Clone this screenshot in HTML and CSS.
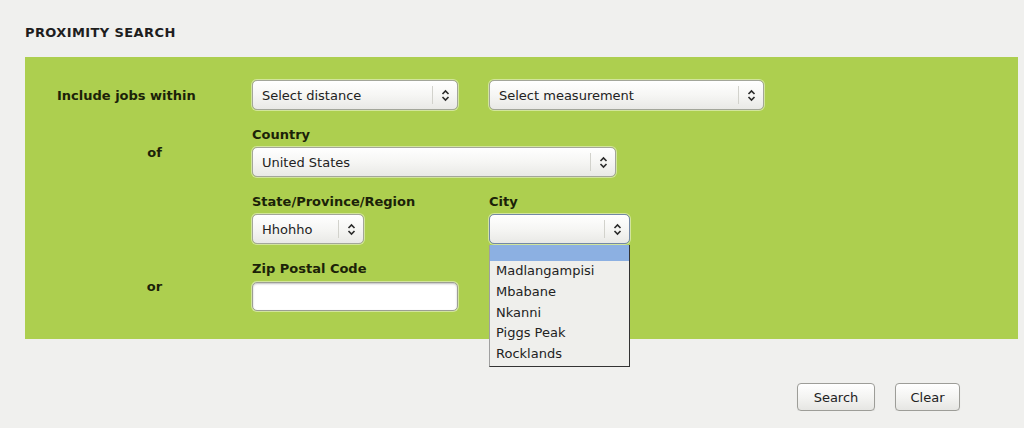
FILE: index.html
```html
<!DOCTYPE html>
<html lang="en">
<head>
    <meta charset="UTF-8">
    <meta name="viewport" content="width=device-width, initial-scale=1.0">
    <title>Proximity Search</title>
    <link rel="stylesheet" href="styles.css">
</head>
<body>

    <h2 class="section-title">PROXIMITY SEARCH</h2>

    <div class="panel">
        <!-- distance + unit -->
        <div class="label label-left">Include jobs within</div>
        <div class="fields">
            <div class="col">
                <div class="select w-distance"><span class="value">Select distance</span><span class="arrow"><svg width="9" height="13" viewBox="0 0 9 13"><path d="M1.5 5 L4.5 2 L7.5 5 M1.5 8 L4.5 11 L7.5 8" /></svg></span></div>
            </div>
            <div class="col">
                <div class="select w-measure"><span class="value">Select measurement</span><span class="arrow"><svg width="9" height="13" viewBox="0 0 9 13"><path d="M1.5 5 L4.5 2 L7.5 5 M1.5 8 L4.5 11 L7.5 8" /></svg></span></div>
            </div>
        </div>

        <!-- country -->
        <div class="label">of</div>
        <div class="fields">
            <div class="col">
                <div class="field-label">Country</div>
                <div class="select w-country"><span class="value">United States</span><span class="arrow"><svg width="9" height="13" viewBox="0 0 9 13"><path d="M1.5 5 L4.5 2 L7.5 5 M1.5 8 L4.5 11 L7.5 8" /></svg></span></div>
            </div>
        </div>

        <!-- state / city -->
        <div class="label"></div>
        <div class="fields">
            <div class="col">
                <div class="field-label">State/Province/Region</div>
                <div class="select w-state"><span class="value">Hhohho</span><span class="arrow"><svg width="9" height="13" viewBox="0 0 9 13"><path d="M1.5 5 L4.5 2 L7.5 5 M1.5 8 L4.5 11 L7.5 8" /></svg></span></div>
            </div>
            <div class="col">
                <div class="field-label">City</div>
                <div class="select w-city open">
                    <span class="value"></span><span class="arrow"><svg width="9" height="13" viewBox="0 0 9 13"><path d="M1.5 5 L4.5 2 L7.5 5 M1.5 8 L4.5 11 L7.5 8" /></svg></span>
                    <ul class="dropdown">
                        <li class="selected">&nbsp;</li>
                        <li>Madlangampisi</li>
                        <li>Mbabane</li>
                        <li>Nkanni</li>
                        <li>Piggs Peak</li>
                        <li>Rocklands</li>
                    </ul>
                </div>
            </div>
        </div>

        <!-- zip -->
        <div class="label">or</div>
        <div class="fields">
            <div class="col">
                <div class="field-label zip-label">Zip Postal Code</div>
                <input type="text" class="text-input" autocomplete="off">
            </div>
        </div>
    </div>

    <div class="actions">
        <button class="btn btn-search">Search</button>
        <button class="btn btn-clear">Clear</button>
    </div>

</body>
</html>
```

FILE: styles.css
```css
body {
    margin: 0;
    padding: 0;
    background-color: #f0f0ee;
    font-family: 'DejaVu Sans', Verdana, sans-serif;
    font-size: 13px;
    color: #222;
}
.section-title {
    margin: 0;
    padding: 25px 0 0 25px;
    font-size: 13px;
    line-height: 16px;
    letter-spacing: 0.4px;
    font-weight: bold;
    color: #1e1e1e;
}
.panel {
    margin: 16px 6px 0 25px;
    padding: 23px 0 28px 0;
    background-color: #adcf4f;
    display: grid;
    grid-template-columns: 227px 1fr;
    row-gap: 17px;
}
.label {
    display: flex;
    align-items: center;
    justify-content: center;
    padding-left: 32px;
    font-weight: bold;
    color: #1b2208;
}
.label-left {
    justify-content: flex-start;
}
.fields {
    display: flex;
}
.col {
    width: 237px;
    display: flex;
    flex-direction: column;
}
.field-label {
    font-weight: bold;
    color: #1b2208;
    line-height: 16px;
    margin-bottom: 4px;
}
.zip-label {
    margin-bottom: 5px;
}
.select {
    position: relative;
    box-sizing: border-box;
    height: 30px;
    display: flex;
    align-items: center;
    border: 1px solid #a3a69a;
    border-radius: 5px;
    background: linear-gradient(#ffffff, #f6f6f4 50%, #e9e9e6);
    box-shadow: 0 0 0 1px rgba(240, 248, 220, 0.55), inset 0 1px 0 #fff;
}
.select .value {
    flex: 1;
    padding-left: 9px;
    white-space: nowrap;
}
.select .arrow {
    width: 24px;
    height: 18px;
    border-left: 1px solid #d2d2cc;
    display: flex;
    align-items: center;
    justify-content: center;
}
.select .arrow path {
    fill: none;
    stroke: #2a2a2a;
    stroke-width: 1.6;
}
.w-distance { width: 206px; }
.w-measure  { width: 275px; }
.w-country  { width: 364px; }
.w-state    { width: 112px; }
.w-city     { width: 141px; }
.select.open {
    border-color: #7388a6;
}
.dropdown {
    position: absolute;
    top: 30px;
    left: -1px;
    width: 141px;
    box-sizing: border-box;
    margin: 0;
    padding: 0 0 1px 0;
    list-style: none;
    background-color: #efefec;
    border-left: 1px solid #a0a0a0;
    border-right: 1px solid #333;
    border-bottom: 1px solid #333;
    z-index: 10;
}
.dropdown li {
    padding-left: 6px;
    line-height: 20.8px;
}
.dropdown li.selected {
    line-height: 16px;
    background-color: #8cb0e2;
}
.text-input {
    box-sizing: border-box;
    width: 206px;
    height: 29px;
    margin: 0;
    border: 1px solid #9c9e94;
    border-radius: 5px;
    background-color: #fff;
    box-shadow: 0 0 0 1px rgba(240, 248, 220, 0.55), inset 0 1px 2px rgba(0, 0, 0, 0.25);
    outline: none;
    font-family: inherit;
    font-size: 13px;
}
.actions {
    display: flex;
    justify-content: flex-end;
    gap: 20px;
    margin-top: 44px;
    padding-right: 64px;
}
.btn {
    box-sizing: border-box;
    height: 28px;
    padding: 0;
    border: 1px solid #9d9d98;
    border-radius: 4px;
    background: linear-gradient(#ffffff, #f4f4f2 50%, #e6e6e3);
    box-shadow: 0 1px 1px rgba(0, 0, 0, 0.08);
    font-family: inherit;
    font-size: 13px;
    color: #222;
    cursor: pointer;
}
.btn-search { width: 78px; }
.btn-clear  { width: 65px; }
```
